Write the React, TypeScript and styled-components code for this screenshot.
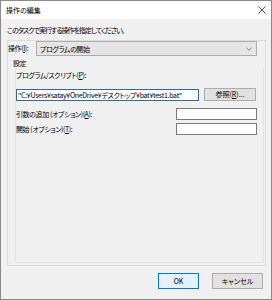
import styled, { createGlobalStyle } from 'styled-components'

const GlobalStyle = createGlobalStyle`
	html, body {
		margin: 0;
		padding: 0;
		background: #f0f0f0;
	}
	body {
		color: #000;
		font-size: 7px;
		letter-spacing: -0.4px;
		font-feature-settings: 'palt';
		font-family: 'Noto Sans CJK JP', 'Noto Sans', sans-serif;
	}
	* {
		box-sizing: border-box;
	}
`

const Window = styled.div`
	width: 272px;
	height: 300px;
	display: flex;
	flex-direction: column;
	background: #f0f0f0;
	border: 1px solid #8b8b8b;
`

const TitleBar = styled.header`
	height: 18px;
	display: flex;
	padding: 0 4px 0 5px;
	align-items: center;
	background: #fff;
	justify-content: space-between;
`

const Title = styled.span`
	line-height: 1;
	letter-spacing: 0;
`

const CloseButton = styled.span`
	width: 10px;
	height: 10px;
	display: flex;
	align-items: center;
	justify-content: center;
`

const Body = styled.main`
	flex: 1;
	display: flex;
	padding: 0 5px 0 6px;
	flex-direction: column;
`

const Description = styled.p`
	margin: 5px 0 0 0;
	height: 12px;
	line-height: 12px;
	letter-spacing: -1px;
`

const Panel = styled.section`
	height: 226px;
	display: flex;
	margin-top: 4px;
	flex-direction: column;
	border: 1px solid #dcdcdc;
`

const ActionRow = styled.div`
	height: 15px;
	display: flex;
	margin-right: 8px;
	align-items: center;
`

const ActionLabel = styled.label`
	width: 28px;
	line-height: 15px;
`

const Combo = styled.div`
	flex: 1;
	height: 15px;
	display: flex;
	padding: 0 4px 0 3px;
	align-items: center;
	background: #e5e5e5;
	border: 1px solid #adadad;
	justify-content: space-between;
`

const SectionLabel = styled.div`
	margin-top: 2px;
	padding-left: 5px;
	line-height: 10px;
`

const Group = styled.div`
	flex: 1;
	display: flex;
	margin: 0 1px 2px 7px;
	padding-right: 6px;
	flex-direction: column;
	border: 1px solid #e3e3e3;
	border-top: none;
`

const FieldLabel = styled.label`
	margin-top: 2px;
	line-height: 10px;
`

const Row = styled.div<{ $gap: number }>`
	display: flex;
	align-items: center;
	margin-top: ${(p) => p.$gap}px;
	justify-content: space-between;
`

const TextBox = styled.input<{ $width: number; $focused?: boolean }>`
	height: 12px;
	margin: 0;
	padding: 0 1px;
	outline: none;
	color: #000;
	font: inherit;
	letter-spacing: -0.3px;
	background: #fff;
	width: ${(p) => p.$width}px;
	border: 1px solid ${(p) => (p.$focused ? '#2f6aa8' : '#7a7a7a')};
`

const Button = styled.button<{ $width: number; $default?: boolean }>`
	height: 14px;
	padding: 0;
	color: #000;
	font: inherit;
	line-height: 1;
	width: ${(p) => p.$width}px;
	background: ${(p) => (p.$default ? '#e5f1fb' : '#e1e1e1')};
	border: 1px solid ${(p) => (p.$default ? '#0078d7' : '#adadad')};
`

const BrowseButton = styled(Button)`
	height: 13px;
	margin-right: 1px;
`

const Footer = styled.footer`
	gap: 13px;
	display: flex;
	padding: 7px 3px 0 0;
	justify-content: flex-end;
	button {
		height: 16px;
	}
`

const Key = styled.span`
	text-decoration: underline;
	text-underline-offset: 1px;
`

const App = () => {
	return (
		<>
			<GlobalStyle />
			<Window>
				<TitleBar>
					<Title>操作の編集</Title>
					<CloseButton>
						<svg width="8" height="8" viewBox="0 0 8 8">
							<path d="M0.5 0.5L7.5 7.5M7.5 0.5L0.5 7.5" stroke="#222" strokeWidth="0.8" />
						</svg>
					</CloseButton>
				</TitleBar>
				<Body>
					<Description>このタスクで実行する操作を指定してください。</Description>
					<Panel>
						<ActionRow>
							<ActionLabel>
								操作(<Key>I</Key>):
							</ActionLabel>
							<Combo>
								<span>プログラムの開始</span>
								<svg width="6" height="4" viewBox="0 0 6 4">
									<path d="M0.5 0.8L3 3.2L5.5 0.8" fill="none" stroke="#666" strokeWidth="0.8" />
								</svg>
							</Combo>
						</ActionRow>
						<SectionLabel>設定</SectionLabel>
						<Group>
							<FieldLabel>
								プログラム/スクリプト(<Key>P</Key>):
							</FieldLabel>
							<Row $gap={8}>
								<TextBox
									$width={183}
									$focused
									readOnly
									defaultValue={'"C:¥Users¥satay¥OneDrive¥デスクトップ¥bat¥test1.bat"'}
								/>
								<BrowseButton $width={52}>
									参照(<Key>R</Key>)...
								</BrowseButton>
							</Row>
							<Row $gap={7}>
								<label>
									引数の追加 (オプション)(<Key>A</Key>):
								</label>
								<TextBox $width={81} readOnly defaultValue="" />
							</Row>
							<Row $gap={3}>
								<label>
									開始 (オプション)(<Key>T</Key>):
								</label>
								<TextBox $width={81} readOnly defaultValue="" />
							</Row>
						</Group>
					</Panel>
					<Footer>
						<Button $width={41} $default>
							OK
						</Button>
						<Button $width={51}>キャンセル</Button>
					</Footer>
				</Body>
			</Window>
		</>
	)
}

export default App
